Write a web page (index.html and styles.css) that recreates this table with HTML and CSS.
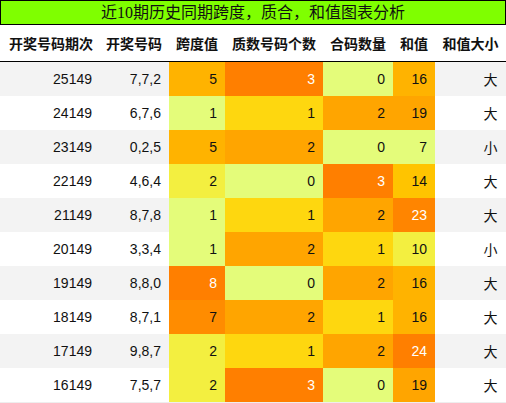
FILE: index.html
```html
<!DOCTYPE html>
<html lang="zh-CN">
<head>
  <meta charset="UTF-8">
  <title>近10期历史同期跨度，质合，和值图表分析</title>
  <link rel="stylesheet" href="styles.css">
</head>
<body>
  <div class="chart">
    <div class="title">近10期历史同期跨度，质合，和值图表分析</div>
    <table class="data">
      <colgroup>
        <col class="c-issue"><col class="c-nums"><col class="c-span"><col class="c-prime"><col class="c-comp"><col class="c-sum"><col class="c-size">
      </colgroup>
      <thead>
        <tr>
          <th>开奖号码期次</th>
          <th>开奖号码</th>
          <th>跨度值</th>
          <th>质数号码个数</th>
          <th>合码数量</th>
          <th>和值</th>
          <th>和值大小</th>
        </tr>
      </thead>
      <tbody>
        <tr>
          <td>25149</td><td>7,7,2</td>
          <td class="h4">5</td><td class="h6">3</td><td class="h1">0</td><td class="h4">16</td><td>大</td>
        </tr>
        <tr>
          <td>24149</td><td>6,7,6</td>
          <td class="h1">1</td><td class="h3">1</td><td class="h5">2</td><td class="h5">19</td><td>大</td>
        </tr>
        <tr>
          <td>23149</td><td>0,2,5</td>
          <td class="h4">5</td><td class="h5">2</td><td class="h1">0</td><td class="h1">7</td><td>小</td>
        </tr>
        <tr>
          <td>22149</td><td>4,6,4</td>
          <td class="h2">2</td><td class="h1">0</td><td class="h6">3</td><td class="h3b">14</td><td>大</td>
        </tr>
        <tr>
          <td>21149</td><td>8,7,8</td>
          <td class="h1">1</td><td class="h3">1</td><td class="h5">2</td><td class="h6b">23</td><td>大</td>
        </tr>
        <tr>
          <td>20149</td><td>3,3,4</td>
          <td class="h1">1</td><td class="h5">2</td><td class="h3">1</td><td class="h2">10</td><td>小</td>
        </tr>
        <tr>
          <td>19149</td><td>8,8,0</td>
          <td class="h6">8</td><td class="h1">0</td><td class="h5">2</td><td class="h4">16</td><td>大</td>
        </tr>
        <tr>
          <td>18149</td><td>8,7,1</td>
          <td class="h5b">7</td><td class="h5">2</td><td class="h3">1</td><td class="h4">16</td><td>大</td>
        </tr>
        <tr>
          <td>17149</td><td>9,8,7</td>
          <td class="h2">2</td><td class="h3">1</td><td class="h5">2</td><td class="h6">24</td><td>大</td>
        </tr>
        <tr>
          <td>16149</td><td>7,5,7</td>
          <td class="h2">2</td><td class="h6">3</td><td class="h1">0</td><td class="h5">19</td><td>大</td>
        </tr>
      </tbody>
    </table>
  </div>
</body>
</html>
```

FILE: styles.css
```css
body {
  margin: 0;
  background-color: #fff;
  font-family: 'Liberation Sans', 'Noto Sans CJK SC', sans-serif;
  color: #111;
}

.chart {
  width: 506px;
}

.title {
  height: 24px;
  line-height: 23px;
  border: 1px solid #000;
  border-top-width: 1px;
  box-sizing: border-box;
  height: 25px;
  background-color: #7fff00;
  text-align: center;
  font-family: 'Liberation Serif', 'Noto Sans CJK SC', serif;
  font-size: 16px;
  color: #111;
}

.data {
  width: 506px;
  border-collapse: collapse;
  table-layout: fixed;
  font-size: 14px;
  border-right: 1px solid #eee;
  border-bottom: 1px solid #eee;
}

.c-issue { width: 100px; }
.c-nums { width: 69px; }
.c-span { width: 56px; }
.c-prime { width: 98px; }
.c-comp { width: 70px; }
.c-sum { width: 42px; }
.c-size { width: 71px; }

.data th {
  height: 36px;
  padding: 0 7px 0 0;
  text-align: right;
  font-weight: bold;
  border-bottom: 1px solid #000;
  white-space: nowrap;
}

.data td {
  height: 34px;
  padding: 0 8px 0 0;
  text-align: right;
  white-space: nowrap;
}

.data tbody tr:nth-child(odd) {
  background-color: #f3f3f3;
}

/* 热度色阶 */
.h1 { background-color: #e4fc7a; }
.h2 { background-color: #f3ef40; }
.h3 { background-color: #fed70f; }
.h3b { background-color: #ffc400; }
.h4 { background-color: #ffb300; }
.h5 { background-color: #ffa500; }
.h5b { background-color: #ff8c00; }
.h6b { background-color: #ff8500; color: #fff; }
.h6 { background-color: #ff7f00; color: #fff; }
```
